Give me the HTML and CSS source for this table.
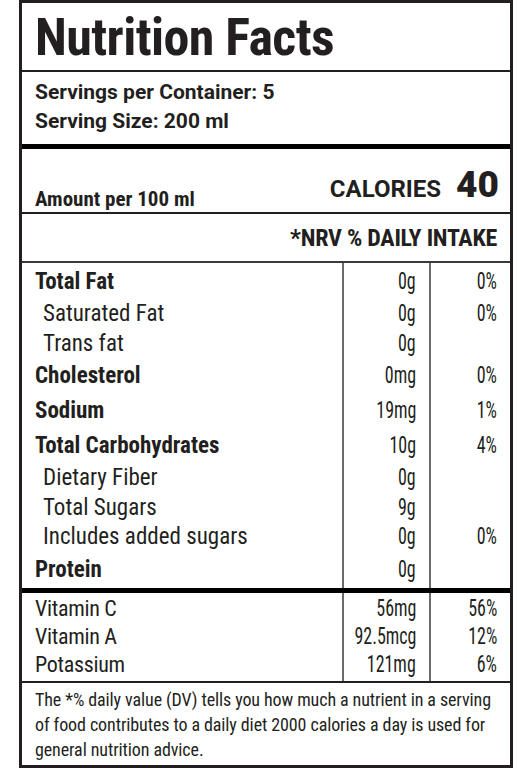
FILE: index.html
```html
<!DOCTYPE html>
<html lang="en">
<head>
    <meta charset="UTF-8">
    <title>Nutrition Facts</title>
    <link rel="stylesheet" href="styles.css">
</head>
<body>
<div class="label">
    <h1 class="title">Nutrition Facts</h1>
    <div class="servings">
        <p>Servings per Container: 5</p>
        <p>Serving Size: 200 ml</p>
    </div>
    <div class="amount">
        <span class="amount-per">Amount per 100 ml</span>
        <span class="calories">CALORIES <b class="calories-value">40</b></span>
    </div>
    <div class="nrv">*NRV % DAILY INTAKE</div>
    <div class="nutrients">
        <div class="row main first">
            <div class="name">Total Fat</div>
            <div class="value"><span>0g</span></div>
            <div class="pct"><span>0%</span></div>
        </div>
        <div class="row sub">
            <div class="name">Saturated Fat</div>
            <div class="value"><span>0g</span></div>
            <div class="pct"><span>0%</span></div>
        </div>
        <div class="row sub">
            <div class="name">Trans fat</div>
            <div class="value"><span>0g</span></div>
            <div class="pct"></div>
        </div>
        <div class="row main">
            <div class="name">Cholesterol</div>
            <div class="value"><span>0mg</span></div>
            <div class="pct"><span>0%</span></div>
        </div>
        <div class="row main">
            <div class="name">Sodium</div>
            <div class="value"><span>19mg</span></div>
            <div class="pct"><span>1%</span></div>
        </div>
        <div class="row main">
            <div class="name">Total Carbohydrates</div>
            <div class="value"><span>10g</span></div>
            <div class="pct"><span>4%</span></div>
        </div>
        <div class="row sub">
            <div class="name">Dietary Fiber</div>
            <div class="value"><span>0g</span></div>
            <div class="pct"></div>
        </div>
        <div class="row sub">
            <div class="name">Total Sugars</div>
            <div class="value"><span>9g</span></div>
            <div class="pct"></div>
        </div>
        <div class="row sub">
            <div class="name">Includes added sugars</div>
            <div class="value"><span>0g</span></div>
            <div class="pct"><span>0%</span></div>
        </div>
        <div class="row main last">
            <div class="name">Protein</div>
            <div class="value"><span>0g</span></div>
            <div class="pct"></div>
        </div>
    </div>
    <div class="vitamins">
        <div class="row vit first">
            <div class="name">Vitamin C</div>
            <div class="value"><span>56mg</span></div>
            <div class="pct"><span>56%</span></div>
        </div>
        <div class="row vit">
            <div class="name">Vitamin A</div>
            <div class="value"><span>92.5mcg</span></div>
            <div class="pct"><span>12%</span></div>
        </div>
        <div class="row vit last">
            <div class="name">Potassium</div>
            <div class="value"><span>121mg</span></div>
            <div class="pct"><span>6%</span></div>
        </div>
    </div>
    <p class="note">The *% daily value (DV) tells you how much a nutrient in a serving<br>
        of food contributes to a daily diet 2000 calories a day is used for<br>
        general nutrition advice.</p>
</div>
</body>
</html>
```

FILE: styles.css
```css
* {
    box-sizing: border-box;
}
body {
    margin: 0;
    padding: 0;
    background-color: #fff;
    color: #231f20;
    font-family: Roboto, "Liberation Sans", Arial, sans-serif;
    font-stretch: 75%;
}
.label {
    width: 494px;
    height: 768px;
    margin: 0 auto;
    border: 3px solid #231f20;
    overflow: hidden;
}
.title {
    margin: 0;
    height: 69px;
    padding: 3px 0 0 13px;
    font-size: 52px;
    font-weight: bold;
    letter-spacing: -0.6px;
    line-height: 64px;
    border-bottom: 2px solid #231f20;
}
.servings {
    height: 77px;
    padding: 6px 13px 0;
    border-bottom: 5px solid #000;
}
.servings p {
    margin: 0;
    font-size: 21px;
    font-stretch: 95%;
    font-weight: bold;
    line-height: 29.4px;
}
.amount {
    height: 65px;
    padding: 0 11px 0 13px;
    display: flex;
    justify-content: space-between;
    align-items: flex-end;
    border-bottom: 2px solid #231f20;
}
.amount-per {
    font-size: 21px;
    font-stretch: 87%;
    font-weight: bold;
    line-height: 1;
    margin-bottom: 2px;
}
.calories {
    font-size: 24px;
    font-stretch: 95%;
    font-weight: bold;
    line-height: 1;
    margin-bottom: 9px;
}
.calories-value {
    font-size: 37px;
    font-stretch: 100%;
    margin-left: 9px;
}
.nrv {
    height: 49px;
    padding-right: 13px;
    display: flex;
    align-items: center;
    justify-content: flex-end;
    font-size: 24px;
    font-weight: bold;
    letter-spacing: -0.25px;
    border-bottom: 2px solid #3a3a3a;
}
.nutrients {
    border-bottom: 5px solid #000;
}
.vitamins {
    border-bottom: 2px solid #231f20;
}
.row {
    display: grid;
    grid-template-columns: 320px 87px 81px;
    height: 29.5px;
    font-size: 23px;
}
.row.main {
    height: 35px;
    font-weight: bold;
}
.row.vit {
    height: 28px;
    font-size: 22px;
}
.row > div {
    display: flex;
    align-items: center;
}
.row.main.first {
    height: 36px;
}
.row.main.first > div {
    padding-top: 1px;
}
.row.main.last {
    height: 36.5px;
}
.row.main.last > div {
    padding-bottom: 1.5px;
}
.row.vit.first {
    height: 29px;
}
.row.vit.first > div {
    padding-top: 1px;
}
.row.vit.last {
    height: 31px;
}
.row.vit.last > div {
    padding-bottom: 3px;
}
.name {
    padding-left: 13px;
}
.row.sub .name {
    padding-left: 21px;
}
.row.vit .name {
    letter-spacing: -0.3px;
}
.value,
.pct {
    justify-content: flex-end;
    padding-right: 13px;
    font-size: 23px;
    font-weight: normal;
    border-left: 2px solid #6b6b6b;
}
.value span,
.pct span {
    display: inline-block;
    transform: scaleX(0.78);
    transform-origin: right center;
}
.note {
    margin: 0;
    padding: 4px 8px 0 13px;
    font-size: 18px;
    letter-spacing: -0.1px;
    line-height: 25px;
    white-space: nowrap;
}
```
